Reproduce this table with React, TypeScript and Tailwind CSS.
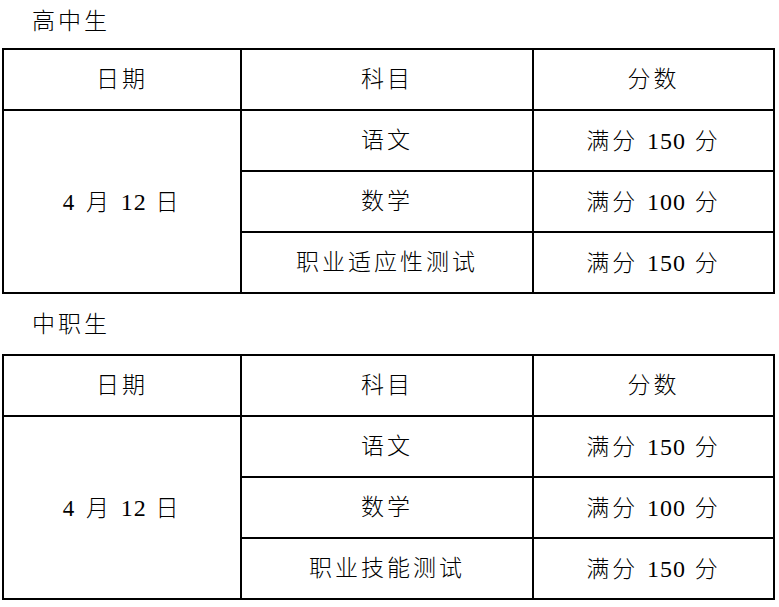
const schedules = [
  {
    title: "高中生",
    subjects: [
      { name: "语文", score: "150" },
      { name: "数学", score: "100" },
      { name: "职业适应性测试", score: "150" },
    ],
  },
  {
    title: "中职生",
    subjects: [
      { name: "语文", score: "150" },
      { name: "数学", score: "100" },
      { name: "职业技能测试", score: "150" },
    ],
  },
];

const cell = "border-2 border-black text-center align-middle h-[61px] p-0";

function Num({ children }: { children: string }) {
  return <span className="tracking-[1px] text-[24px]">{children}</span>;
}

function ExamTable({ subjects }: { subjects: { name: string; score: string }[] }) {
  return (
    <table className="table-fixed border-collapse w-[771px]">
      <colgroup>
        <col className="w-[238px]" />
        <col className="w-[292px]" />
        <col className="w-[241px]" />
      </colgroup>
      <thead>
        <tr>
          <th className={`${cell} font-light`}>日期</th>
          <th className={`${cell} font-light`}>科目</th>
          <th className={`${cell} font-light`}>分数</th>
        </tr>
      </thead>
      <tbody>
        {subjects.map((s, i) => (
          <tr key={s.name}>
            {i === 0 && (
              <td rowSpan={subjects.length} className={cell}>
                4 月 <Num>12</Num> 日
              </td>
            )}
            <td className={cell}>{s.name}</td>
            <td className={cell}>
              满分 <Num>{s.score}</Num> 分
            </td>
          </tr>
        ))}
      </tbody>
    </table>
  );
}

export default function App() {
  return (
    <main
      className="min-h-screen bg-white text-black text-[23px] font-light tracking-[3px] leading-none pl-[2px]"
      style={{ fontFamily: '"Liberation Serif", "Noto Sans CJK SC", serif' }}
    >
      {schedules.map((s, i) => (
        <section key={s.title}>
          <div className={`flex items-center pl-[30px] ${i === 0 ? "h-[48px] pb-[6px]" : "h-[60px]"}`}>
            {s.title}
          </div>
          <ExamTable subjects={s.subjects} />
        </section>
      ))}
    </main>
  );
}
